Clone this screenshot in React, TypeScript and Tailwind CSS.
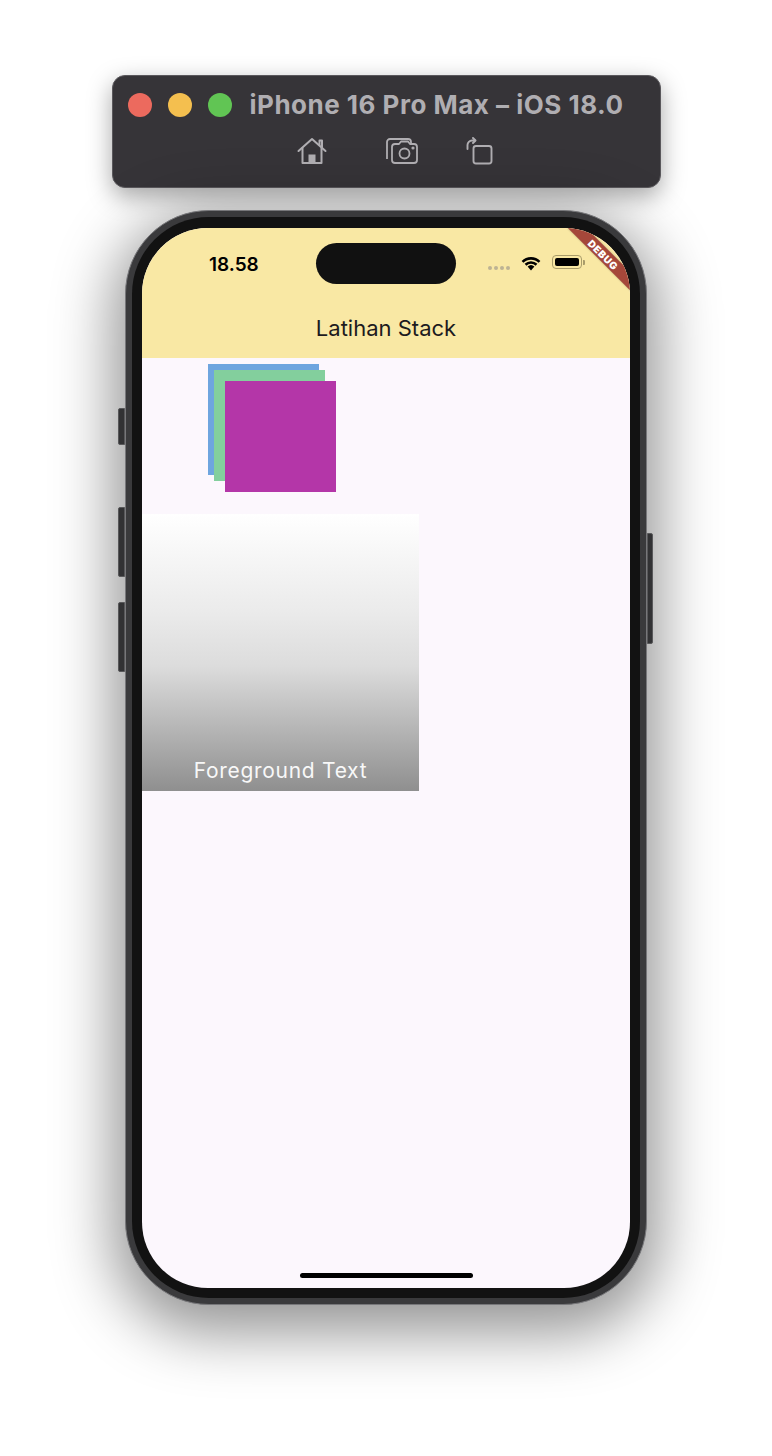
import React from "react";

function HomeIcon() {
  return (
    <svg width="32" height="28" viewBox="0 0 32 28" fill="none" stroke="#b0aeb2" strokeWidth="2" strokeLinejoin="round" strokeLinecap="round">
      <path d="M2.5 14 L16 2 L29.5 14" />
      <path d="M23.5 8 V3.5 H26 V11" />
      <path d="M6.5 11 V26 H25.5 V11" />
      <rect x="12.5" y="17.5" width="7" height="8.5" fill="#b0aeb2" stroke="none" />
    </svg>
  );
}

function CameraIcon() {
  return (
    <svg width="34" height="28" viewBox="0 0 34 28" fill="none" stroke="#b0aeb2" strokeWidth="1.8" strokeLinejoin="round">
      <path d="M2 22 V5 a3 3 0 0 1 3 -3 H23 a3 3 0 0 1 3 3 V6" />
      <path d="M7 10 a3 3 0 0 1 3 -3 H14 L16 4.5 H23 L25 7 H29 a3 3 0 0 1 3 3 V23 a3 3 0 0 1 -3 3 H10 a3 3 0 0 1 -3 -3 Z" />
      <circle cx="19.5" cy="16.5" r="5" />
      <circle cx="28" cy="11" r="0.7" fill="#b0aeb2" />
    </svg>
  );
}

function RotateIcon() {
  return (
    <svg width="28" height="28" viewBox="0 0 28 28" fill="none" stroke="#b0aeb2" strokeWidth="1.9" strokeLinejoin="round" strokeLinecap="round">
      <rect x="8.5" y="9" width="18" height="17.5" rx="2.5" />
      <path d="M2.5 12 V8 a4.5 4.5 0 0 1 4.5 -4.5 H10" />
      <path d="M8 1 L10.5 3.5 L8 6" />
    </svg>
  );
}

function WifiIcon() {
  return (
    <svg width="20" height="15" viewBox="0 0 20 15">
      <path d="M10 14.5 L6.6 10.6 a5 5 0 0 1 6.8 0 Z" fill="#000" />
      <path d="M3.6 7.8 a9.2 9.2 0 0 1 12.8 0 L14.6 9.7 a6.6 6.6 0 0 0 -9.2 0 Z" fill="#000" />
      <path d="M0.6 4.9 a13.4 13.4 0 0 1 18.8 0 L17.6 6.8 a10.8 10.8 0 0 0 -15.2 0 Z" fill="#000" />
    </svg>
  );
}

export default function App() {
  return (
    <div
      className="w-[772px] h-[1456px] bg-white flex flex-col items-center overflow-hidden"
      style={{ fontFamily: "Inter, 'Noto Sans', sans-serif" }}
    >
      {/* Simulator title bar */}
      <div className="mt-[75px] w-[549px] h-[113px] rounded-[13px] bg-[#363438] border border-[#5a585c] shadow-[0_8px_24px_rgba(0,0,0,0.35)] flex flex-col">
        <div className="flex items-center h-[58px] pl-[15px]">
          <div className="w-[24px] h-[24px] rounded-full bg-[#ec6a5e]" />
          <div className="w-[24px] h-[24px] rounded-full bg-[#f4bf4f] ml-[16px]" />
          <div className="w-[24px] h-[24px] rounded-full bg-[#61c554] ml-[16px]" />
          <div className="ml-[18px] text-[26px] font-bold text-[#b0aeb2] leading-none tracking-[0.5px]">
            iPhone 16 Pro Max – iOS 18.0
          </div>
        </div>
        <div className="flex items-start pl-[183px] mt-[3px]">
          <HomeIcon />
          <div className="ml-[57px]"><CameraIcon /></div>
          <div className="ml-[46px]"><RotateIcon /></div>
        </div>
      </div>

      {/* Phone */}
      <div className="relative mt-[22px] w-[522px] h-[1095px] rounded-[84px] bg-[#3a3a3c] border border-[#77777a] p-[6px] shadow-[0_16px_60px_12px_rgba(0,0,0,0.42)]">
        {/* side buttons */}
        <div className="absolute left-[-8px] top-[197px] w-[7px] h-[37px] rounded-l-[2px] bg-[#323234] border border-[#58585a]" />
        <div className="absolute left-[-8px] top-[296px] w-[7px] h-[70px] rounded-l-[2px] bg-[#323234] border border-[#58585a]" />
        <div className="absolute left-[-8px] top-[391px] w-[7px] h-[70px] rounded-l-[2px] bg-[#323234] border border-[#58585a]" />
        <div className="absolute right-[-7px] top-[322px] w-[6px] h-[111px] rounded-r-[2px] bg-[#323234] border border-[#58585a]" />

        <div className="w-full h-full rounded-[77px] bg-[#121212] px-[10px] pt-[11px] pb-[10px]">
          <div className="relative w-full h-full rounded-[66px] overflow-hidden bg-[#fcf7fd] flex flex-col">
            {/* App bar */}
            <div className="bg-[#f9e8a4] h-[130px] flex flex-col shrink-0">
              <div className="relative h-[70px]">
                <div className="absolute left-[67px] top-[27px] text-[19px] font-semibold text-black leading-none">
                  18.58
                </div>
                <div className="absolute left-[174px] top-[15px] w-[140px] h-[41px] rounded-full bg-[#111111]" />
                <div className="absolute left-[346px] top-[38px] flex gap-[2px]">
                  <div className="w-[4px] h-[4px] rounded-full bg-[#bdb394]" />
                  <div className="w-[4px] h-[4px] rounded-full bg-[#bdb394]" />
                  <div className="w-[4px] h-[4px] rounded-full bg-[#bdb394]" />
                  <div className="w-[4px] h-[4px] rounded-full bg-[#bdb394]" />
                </div>
                <div className="absolute left-[379px] top-[28px]">
                  <WifiIcon />
                </div>
                <div className="absolute left-[410px] top-[27px] flex items-center">
                  <div className="w-[30px] h-[14px] rounded-[4px] border border-[#a99c6a] p-[2px]">
                    <div className="w-full h-full rounded-[2px] bg-black" />
                  </div>
                  <div className="w-[2px] h-[5px] rounded-r-[1px] bg-[#a99c6a] ml-[1px]" />
                </div>
                {/* Debug banner */}
                <div className="absolute left-[417px] top-[20px] w-[89px] h-[13px] bg-[#a5473a] rotate-45 flex items-center justify-center shadow-[0_0_2px_rgba(0,0,0,0.3)]">
                  <span className="text-[10px] font-black text-white leading-none tracking-[0.6px]">DEBUG</span>
                </div>
              </div>
              <div className="h-[60px] flex items-center justify-center">
                <span className="text-[22px] text-[#1d1b20] leading-none">Latihan Stack</span>
              </div>
            </div>

            {/* Stack of squares */}
            <div className="relative ml-[66px] mt-[6px] w-[128px] h-[128px] shrink-0">
              <div className="absolute left-0 top-0 w-[111px] h-[111px] bg-[#6ea5df]" />
              <div className="absolute left-[6px] top-[6px] w-[111px] h-[111px] bg-[#83cf9d]" />
              <div className="absolute left-[17px] top-[17px] w-[111px] h-[111px] bg-[#b436a8]" />
            </div>

            {/* Gradient box with text */}
            <div className="mt-[22px] w-[277px] h-[277px] shrink-0 bg-[linear-gradient(to_bottom,#ffffff_0%,#ebebeb_35%,#dcdcdc_55%,#8f8f8f_100%)] flex items-end justify-center pb-[10px]">
              <span className="text-[21px] text-[#f8f8f8] tracking-[0.7px] leading-none">Foreground Text</span>
            </div>

            <div className="flex-1" />
            <div className="h-[5px] w-[173px] rounded-full bg-black self-center mb-[10px]" />
          </div>
        </div>
      </div>
    </div>
  );
}
